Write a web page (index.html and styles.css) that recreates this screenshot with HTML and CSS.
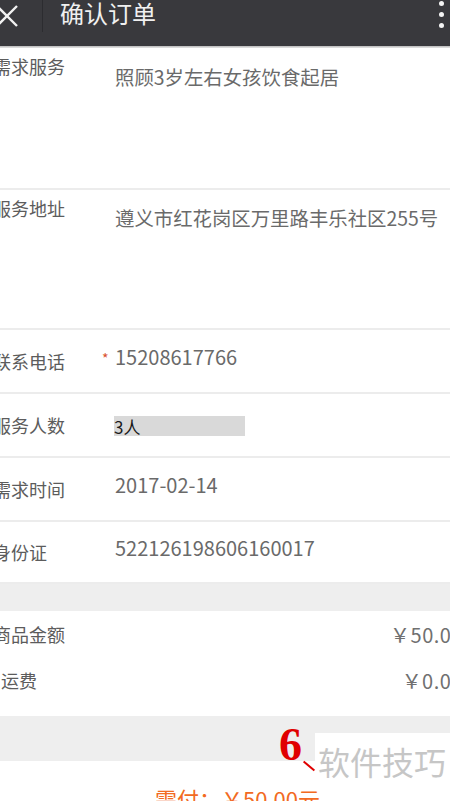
FILE: index.html
```html
<!DOCTYPE html>
<html lang="zh">
<head>
<meta charset="utf-8">
<link rel="stylesheet" href="styles.css">
</head>
<body>
<div class="page">
  <header class="topbar">
    <div class="close">
      <svg width="24" height="24" viewBox="0 0 24 24"><path d="M2 2 L22 22 M22 2 L2 22" stroke="#f2f2f2" stroke-width="2.4" fill="none"/></svg>
    </div>
    <div class="divider"></div>
    <div class="title">确认订单</div>
    <div class="more"><span></span><span></span><span></span></div>
  </header>
  <div class="shadow"></div>

  <section class="form">
    <div class="row tall first">
      <div class="label">需求服务</div>
      <div class="value v1">照顾3岁左右女孩饮食起居</div>
    </div>
    <div class="row tall">
      <div class="label">服务地址</div>
      <div class="value v2">遵义市红花岗区万里路丰乐社区255号</div>
    </div>
    <div class="row">
      <div class="label">联系电话</div>
      <div class="value"><span class="req">*</span>15208617766</div>
    </div>
    <div class="row">
      <div class="label">服务人数</div>
      <div class="value"><span class="select">3人</span></div>
    </div>
    <div class="row">
      <div class="label">需求时间</div>
      <div class="value">2017-02-14</div>
    </div>
    <div class="row last">
      <div class="label">身份证</div>
      <div class="value">522126198606160017</div>
    </div>
  </section>

  <div class="gap"></div>

  <section class="summary">
    <div class="sumrow">
      <div class="slabel">商品金额</div>
      <div class="amount">￥50.00</div>
    </div>
    <div class="sumrow">
      <div class="slabel indent">运费</div>
      <div class="amount">￥0.00</div>
    </div>
  </section>

  <div class="gap2"></div>

  <footer class="pay">需付：￥50.00元</footer>

  <div class="mark">
    <span class="num">6</span>
    <span class="slash"></span>
    <span class="mtext">软件技巧</span>
  </div>
</div>
</body>
</html>
```

FILE: styles.css
```css
* { box-sizing: border-box; margin: 0; padding: 0; }
html, body { width: 450px; height: 801px; overflow: hidden; background: #fff; }
body { font-family: "Noto Sans CJK SC", "Noto Sans", sans-serif; }
.page { position: relative; width: 450px; height: 801px; overflow: hidden; }

.topbar {
  height: 46px;
  background: #39393d;
  display: flex;
  align-items: flex-start;
  position: relative;
}
.close { width: 42px; height: 32px; display: flex; align-items: center; margin-left: -5px; }
.close svg { display: block; }
.divider { width: 1px; height: 32px; background: #2c2c30; margin-left: 5px; }
.title {
  margin-left: 17px;
  margin-top: -4px;
  font-size: 24px;
  line-height: 34px;
  color: #f0f0f0;
}
.more {
  margin-left: auto;
  width: 18px;
  display: flex;
  flex-direction: column;
  align-items: center;
  gap: 6px;
  margin-top: 1px;
}
.more span { width: 5px; height: 5px; border-radius: 50%; background: #f4f4f4; }
.shadow { height: 2px; background: linear-gradient(#b8b8b8, #e6e6e6); }

.row {
  display: flex;
  align-items: center;
  height: 64px;
  border-bottom: 2px solid #ececec;
}
.row.tall { height: 140px; align-items: flex-start; }
.row.tall.first { height: 142px; }
.label {
  flex: 0 0 122px;
  margin-left: -7px;
  font-size: 18px;
  line-height: 24px;
  color: #5c5c5c;
  white-space: nowrap;
}
.row.tall .label { margin-top: 6px; }
.value {
  font-size: 20px;
  line-height: 28px;
  color: #6a6a6a;
  white-space: nowrap;
  margin-bottom: 8px;
}
.row.tall .value { margin-top: 15px; margin-bottom: 0; font-size: 19.4px; }
.row.tall .value.v2 { margin-top: 14px; }
.req {
  display: inline-block;
  width: 13px;
  margin-left: -13px;
  color: #d9502e;
  font-size: 14px;
  vertical-align: 1px;
}
.select {
  display: inline-block;
  width: 131px;
  height: 20px;
  background: #d9d9d9;
  color: #1a1a1a;
  font-size: 17px;
  line-height: 22px;
  vertical-align: middle;
  margin-top: 8px;
  margin-left: -1px;
}
.row.last { height: 62px; }

.gap { height: 27px; background: #eeeeee; }
.sumrow {
  display: flex;
  justify-content: space-between;
  align-items: center;
  height: 46px;
  font-size: 18px;
  color: #5c5c5c;
}
.slabel { margin-left: -7px; line-height: 24px; }
.slabel.indent { margin-left: 1px; }
.amount {
  margin-right: -13px;
  font-size: 20px;
  color: #707070;
  letter-spacing: 0.5px;
}
.gap2 { height: 45px; margin-top: 13px; background: #eeeeee; }
.pay {
  padding-left: 155px;
  padding-top: 22px;
  font-size: 22px;
  line-height: 30px;
  color: #f26a22;
}

.mark { position: absolute; left: 278px; top: 728px; width: 172px; height: 62px; }
.mark .num {
  position: absolute; left: 1px; top: -6px;
  font-family: "Liberation Serif", serif;
  font-weight: bold;
  font-size: 46px;
  line-height: 46px;
  color: #e00000;
}
.mark .slash {
  position: absolute; left: 24px; top: 37px;
  width: 14px; height: 2px; background: #e00000;
  transform: rotate(40deg);
}
.mark .mtext {
  position: absolute; left: 37px; top: 5px;
  width: 135px; height: 57px;
  background: #fff;
  color: #c6c6c6;
  font-size: 32px;
  line-height: 57px;
  padding-left: 3px;
  white-space: nowrap;
}
```
